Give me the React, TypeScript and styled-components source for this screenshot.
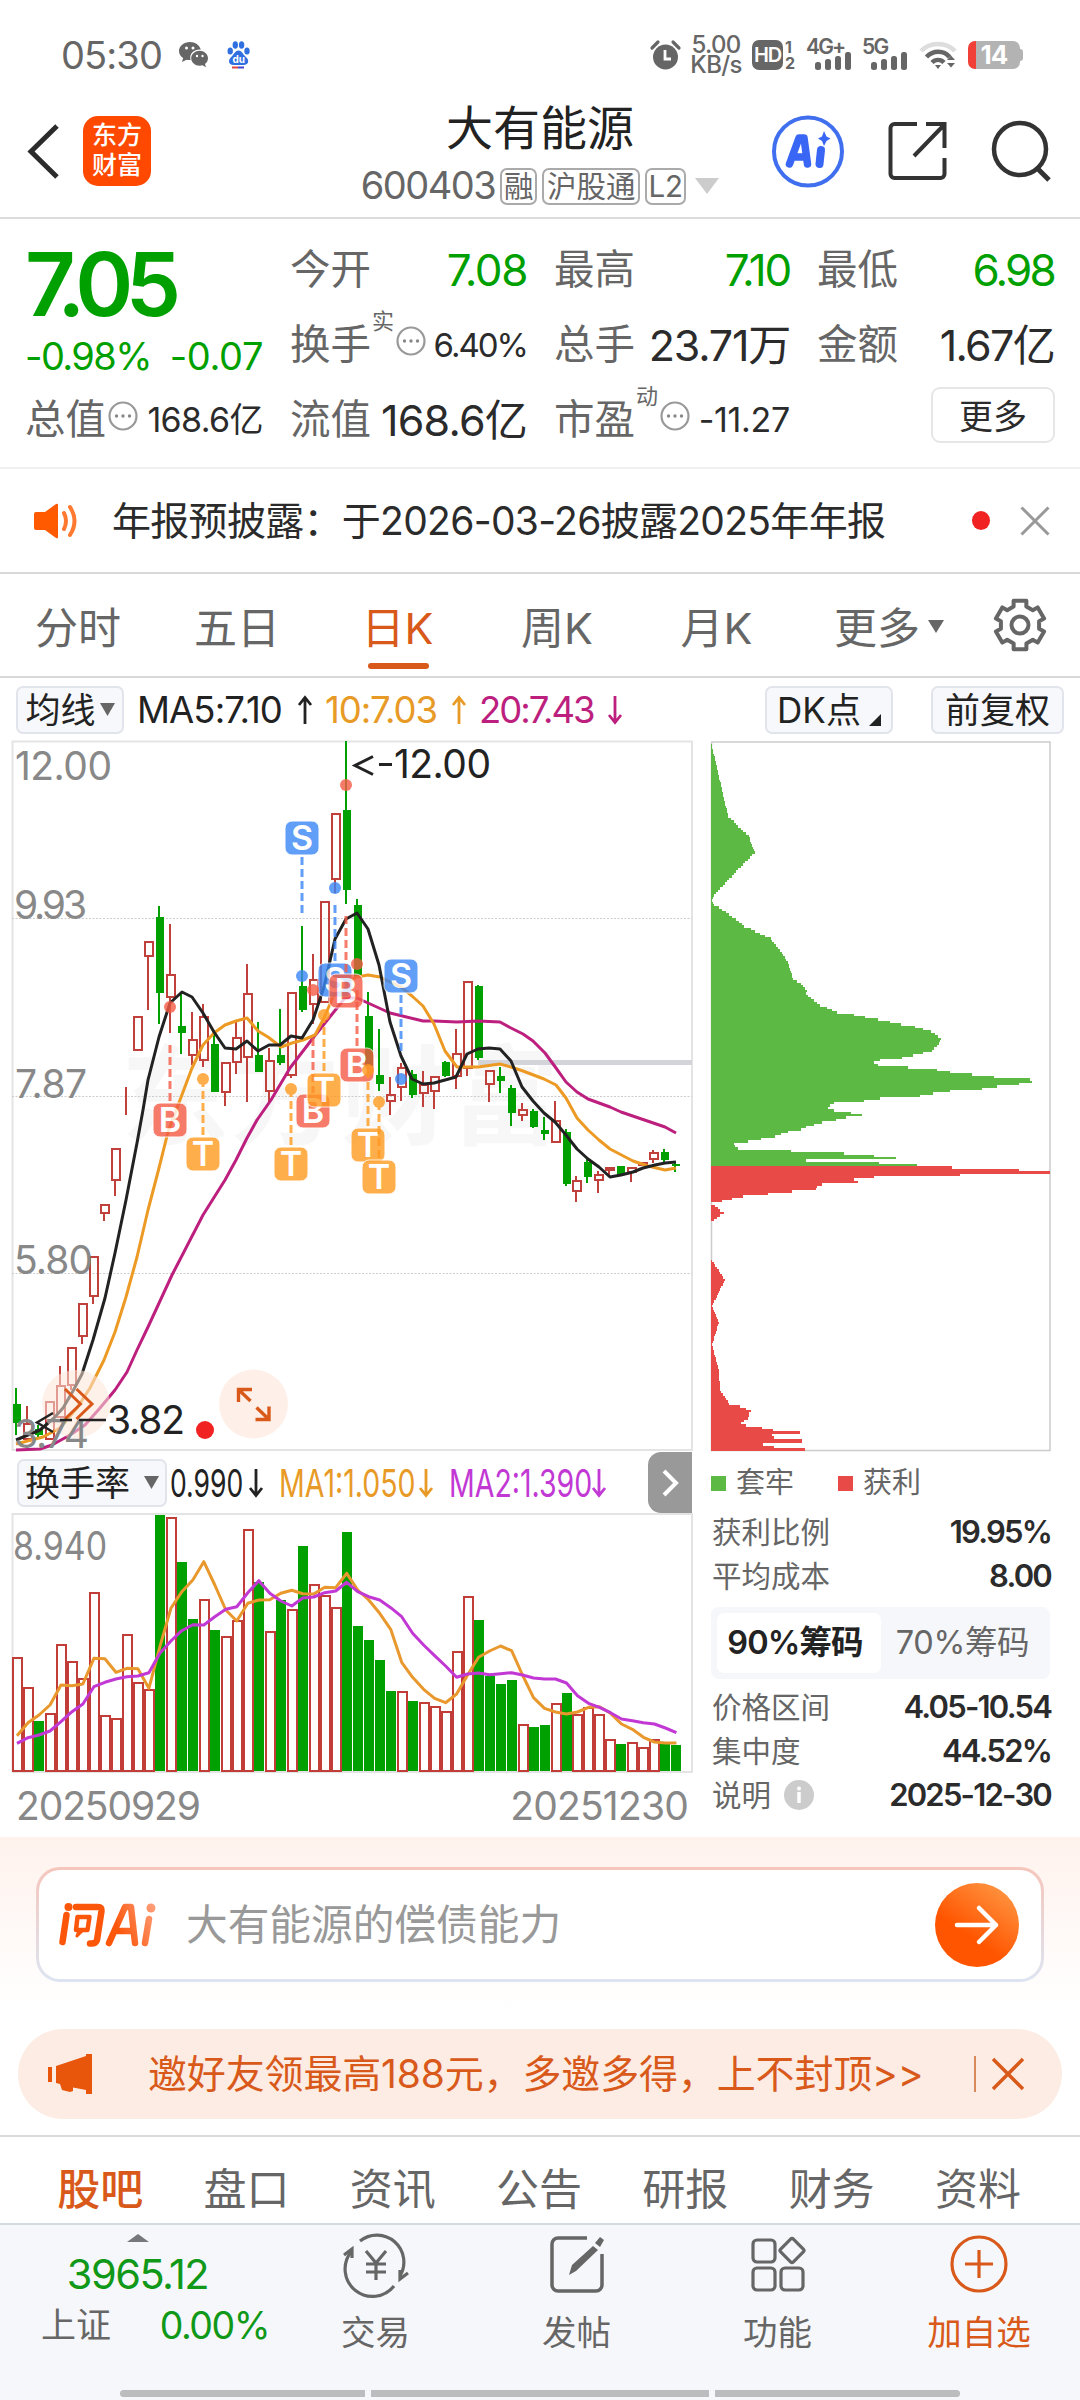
import React from 'react';
import styled, { createGlobalStyle, css } from 'styled-components';

const GREEN = '#00a000';
const RED = '#c0403c';
const ORANGE = '#e89a26';
const MAGENTA = '#bc1f7e';
const BRAND = '#d8591a';

const Global = createGlobalStyle`
  * { box-sizing: border-box; }
  html, body { margin: 0; padding: 0; background: #fff; }
  svg { display: block; flex: none; overflow: visible; }
`;

const Page = styled.main`
  width: 1080px;
  height: 2400px;
  overflow: hidden;
  display: flex;
  flex-direction: column;
  background: #fff;
  color: #2b2b2b;
  font-family: Inter, 'Noto Sans CJK SC', sans-serif;
  white-space: nowrap;
`;

type TextProps = { $size: number; $color?: string; $ls?: number; $mt?: number };
const Text = styled.span<TextProps>`
  font-size: ${p => p.$size}px;
  line-height: 1.2;
  color: ${p => p.$color ?? 'inherit'};
  letter-spacing: ${p => p.$ls ?? 0}px;
  margin-top: ${p => p.$mt ?? 0}px;
`;

/* ---------- status bar ---------- */

const StatusBar = styled.header`
  height: 109px;
  display: flex;
  align-items: center;
  padding: 0 60px 0 61px;
  color: #666;
`;
const Clock = styled.span`
  width: 118px;
  font-size: 38px;
  line-height: 46px;
  letter-spacing: -0.9px;
`;
const BaiduIcon = styled.svg`
  margin-left: 18px;
`;
const StatusIcons = styled.div`
  margin-left: auto;
  display: flex;
  align-items: center;
`;
const Speed = styled.div`
  width: 52px;
  margin: 0 10px 0 9px;
  font-size: 24px;
  line-height: 19.500px;
  font-weight: 500;
  text-align: center;
  letter-spacing: -0.7px;
`;
const HdBadge = styled.div`
  width: 31px;
  height: 30px;
  border-radius: 7px;
  background: #666;
  color: #fff;
  font-size: 20px;
  line-height: 30px;
  font-weight: 600;
  letter-spacing: -1.2px;
  text-align: center;
`;
const SimNumbers = styled.div`
  width: 12px;
  margin: 0 9px 0 2px;
  font-size: 16px;
  line-height: 16px;
  font-weight: 700;
`;
const Signal = styled.div<{ $w: number }>`
  width: ${p => p.$w}px;
  height: 32px;
  display: flex;
  flex-direction: column;
  font-size: 21px;
  line-height: 15px;
  font-weight: 600;
  letter-spacing: -1.8px;
  svg { margin: -2px 0 0 9px; }
`;
const Battery = styled.div`
  position: relative;
  width: 52px;
  height: 28px;
  margin-left: 11px;
  border-radius: 7px;
  background: linear-gradient(90deg, #f04038 0 8px, #b3b3b3 8px);
  color: #fff;
  font-size: 26px;
  line-height: 28px;
  font-weight: 700;
  text-align: center;
  letter-spacing: -1px;
  &::after {
    content: '';
    position: absolute;
    right: -3px;
    top: 8px;
    width: 3px;
    height: 12px;
    border-radius: 0 3px 3px 0;
    background: #b3b3b3;
  }
`;

const SignalBars = () => (
  <svg width="38" height="19" viewBox="0 0 38 19">
    <g fill="#666">
      <rect x="0" y="10" width="6" height="8" rx="2.500" />
      <rect x="10" y="7" width="6" height="11" rx="2.500" />
      <rect x="20" y="4" width="6" height="14" rx="2.500" />
      <rect x="30" y="0" width="6" height="18" rx="2.500" />
    </g>
  </svg>
);

function Status() {
  return (
    <StatusBar>
      <Clock>05:30</Clock>
      <svg width="30" height="26" viewBox="0 0 30 26">
        <path fill="#666" d="M11 0C4.800 0 0 4 0 9c0 3 1.600 5.400 4.200 7L3 20l4.500-2.300c1.200.3 2.300.4 3.500.4h.6C10 12 14.500 7.500 21 7.500h.8C20.500 3 16.200 0 11 0z" />
        <path fill="#666" d="M29 16.300c0-4.300-4-7.500-8.400-7.500s-8.400 3.200-8.400 7.500 4 7.500 8.400 7.500c1 0 2-.2 2.900-.5l3.400 2-.9-3.200c1.900-1.500 3-3.600 3-5.800z" />
        <g fill="#fff"><circle cx="7.500" cy="6" r="1.500" /><circle cx="14" cy="6" r="1.500" /><circle cx="18" cy="14" r="1.200" /><circle cx="23.500" cy="14" r="1.200" /></g>
      </svg>
      <BaiduIcon width="24" height="28" viewBox="0 0 24 28">
        <g fill="#2f6fe0">
          <ellipse cx="3.200" cy="10" rx="2.700" ry="3.600" /><ellipse cx="8.300" cy="4" rx="2.700" ry="3.800" />
          <ellipse cx="14.600" cy="4" rx="2.700" ry="3.800" /><ellipse cx="20" cy="10" rx="2.700" ry="3.600" />
          <path d="M11.500 9.500c-3 0-4.300 3.500-6.300 5.400C3 17 2 18.500 2 20.300 2 23 4 24 6.500 24h10c2.600 0 4.700-1.300 4.700-3.800 0-2.200-1.800-3.700-3.500-5.400-1.800-1.800-3-5.300-6.200-5.300z" />
        </g>
        <rect x="5" y="25.500" width="6" height="2" fill="#d44" /><rect x="11" y="25.500" width="6" height="2" fill="#44c" />
        <text x="5.500" y="22" fontSize="10" fontWeight="700" fill="#fff" fontFamily="Inter">du</text>
      </BaiduIcon>
      <StatusIcons>
        <svg width="31" height="30" viewBox="0 0 31 30">
          <circle cx="15.500" cy="17" r="12.500" fill="#666" />
          <path d="M2 8l6-6M29 8l-6-6" stroke="#666" strokeWidth="3.200" strokeLinecap="round" />
          <path d="M15 10v9h6" stroke="#fff" strokeWidth="2.800" fill="none" />
        </svg>
        <Speed>5.00<br />KB/s</Speed>
        <HdBadge>HD</HdBadge>
        <SimNumbers>1<br />2</SimNumbers>
        <Signal $w={56}>4G+<SignalBars /></Signal>
        <Signal $w={57}>5G<SignalBars /></Signal>
        <svg width="38" height="30" viewBox="0 0 38 30">
          <g fill="none" stroke="#666" strokeWidth="4.500">
            <path d="M2 11C11 1.500 27 1.500 36 11" stroke="#ddd" />
            <path d="M7.500 17C14 10 25 10 30.500 17" />
            <path d="M13 22.500C16.500 19 21.500 19 25 22.500" />
          </g>
          <path d="M19 29l-3-4h6zM28 20h8l-4-4.500zM28 23h8l-4 4.500z" fill="#666" />
        </svg>
        <Battery>14</Battery>
      </StatusIcons>
    </StatusBar>
  );
}

/* ---------- title bar ---------- */

const TitleBar = styled.div`
  height: 110px;
  border-bottom: 2px solid #dcdcdc;
  display: grid;
  grid-template-columns: 340px 400px 340px;
`;
const TitleLeft = styled.div`
  display: flex;
  align-items: flex-start;
  gap: 25px;
  padding: 7px 0 0 26px;
`;
const AppLogo = styled.div`
  width: 68px;
  height: 70px;
  border-radius: 15px;
  background: #ff4800;
  color: #fff;
  font-size: 25px;
  line-height: 30px;
  font-weight: 500;
  text-align: center;
  padding-top: 4px;
`;
const TitleCenter = styled.div`
  display: flex;
  flex-direction: column;
  align-items: center;
`;
const StockName = styled.h1`
  margin: -11px 0 0;
  font-size: 47px;
  line-height: 60px;
  font-weight: 400;
  color: #222;
`;
const CodeRow = styled.div`
  height: 38px;
  margin-top: 9px;
  display: flex;
  align-items: center;
  color: #666;
`;
const Tag = styled.span<{ $w: number }>`
  width: ${p => p.$w}px;
  height: 37px;
  margin-left: 5px;
  border: 2px solid #aaa;
  border-radius: 7px;
  font-size: 29.500px;
  line-height: 32px;
  text-align: center;
`;
const TagCaret = styled.svg`
  margin-left: 9px;
`;
const TitleRight = styled.div`
  display: flex;
  align-items: flex-start;
  padding: 6px 0 0 31px;
`;
const ShareIcon = styled.svg`
  margin: 5px 0 0 42px;
`;
const SearchIcon = styled.svg`
  margin: 6px 0 0 41px;
`;

function Title() {
  return (
    <TitleBar>
      <TitleLeft>
        <svg width="32" height="70" viewBox="0 0 32 70">
          <path d="M31 10L5 35.500 31 61" fill="none" stroke="#2b2b2b" strokeWidth="5" />
        </svg>
        <AppLogo>东方<br />财富</AppLogo>
      </TitleLeft>
      <TitleCenter>
        <StockName>大有能源</StockName>
        <CodeRow>
          <Text $size={38} $ls={-1.5}>600403</Text>
          <Tag $w={37}>融</Tag>
          <Tag $w={98}>沪股通</Tag>
          <Tag $w={41}>L2</Tag>
          <TagCaret width="24" height="16" viewBox="0 0 24 16"><path d="M0 0h24L12 16z" fill="#ccc" /></TagCaret>
        </CodeRow>
      </TitleCenter>
      <TitleRight>
        <svg width="74" height="74" viewBox="0 0 74 74">
          <circle cx="37" cy="36.500" r="34" fill="#fff" stroke="#3f6fee" strokeWidth="4" />
          <g fill="none" stroke="#3a66f5" strokeLinejoin="round" strokeLinecap="round">
            <path d="M18.500 49l9.500-26h5l3.500 26M23 42h12" strokeWidth="7.500" />
            <path d="M50 35l-1.500 14" strokeWidth="8" />
          </g>
          <path d="M53 16l2.500 5.500 4 2-4 2.500L53 31l-2-5-4-2.500 4-2z" fill="#3a66f5" />
        </svg>
        <ShareIcon width="62" height="62" viewBox="0 0 62 62">
          <g fill="none" stroke="#333" strokeWidth="4">
            <path d="M30 4H7.500a4 4 0 0 0-4 4v46a4 4 0 0 0 4 4h46a4 4 0 0 0 4-4V38" />
            <path d="M39 4h18.500v24M57 5L27 36" />
          </g>
        </ShareIcon>
        <SearchIcon width="64" height="64" viewBox="0 0 64 64">
          <circle cx="30" cy="28" r="26" fill="none" stroke="#333" strokeWidth="4.500" />
          <path d="M46 46l13 13" stroke="#333" strokeWidth="5" />
        </SearchIcon>
      </TitleRight>
    </TitleBar>
  );
}

/* ---------- quote summary ---------- */

const Quote = styled.section`
  height: 250px;
  border-bottom: 2px solid #efefef;
  padding: 13px 25px 0 25px;
  display: grid;
  grid-template-columns: 238px 237px 236px 237px;
  grid-template-rows: 75px 75px 75px;
  column-gap: 27px;
`;
const PriceCell = styled.div`
  grid-row: 1 / 3;
  display: flex;
  flex-direction: column;
`;
const Price = styled.div`
  margin-top: 8px;
  height: 88px;
  font-size: 88px;
  line-height: 88px;
  font-weight: 600;
  letter-spacing: -7.5px;
  color: ${GREEN};
`;
const Changes = styled.div`
  display: flex;
  justify-content: space-between;
  margin-top: 6px;
`;
const Cell = styled.div`
  height: 75px;
  display: flex;
  align-items: center;
  color: #666;
  font-size: 40.500px;
  line-height: 60px;
`;
const Value = styled.span<{ $size: number; $green?: boolean; $ls?: number }>`
  margin-left: auto;
  color: ${p => (p.$green ? GREEN : '#2b2b2b')};
  font-size: ${p => p.$size}px;
  letter-spacing: ${p => p.$ls ?? -1.7}px;
`;
const Sup = styled.sup`
  align-self: flex-start;
  margin: 0 0 0 1px;
  font-size: 22px;
  line-height: 28px;
`;
const DotsIcon = styled.svg`
  margin: 0 0 7px 2px;
`;
const MoreButton = styled.button`
  margin: -10px -1px 0 auto;
  width: 124px;
  height: 56px;
  border: 2px solid #e6e6e6;
  border-radius: 9px;
  background: #fff;
  padding: 0;
  font: 400 34px/50px 'Noto Sans CJK SC', sans-serif;
  color: #2b2b2b;
`;

const Dots = () => (
  <DotsIcon width="30" height="30" viewBox="0 0 30 30">
    <circle cx="15" cy="15" r="13.500" fill="none" stroke="#999" strokeWidth="2.200" />
    <g fill="#888"><circle cx="8.500" cy="15" r="1.700" /><circle cx="15" cy="15" r="1.700" /><circle cx="21.500" cy="15" r="1.700" /></g>
  </DotsIcon>
);

function QuotePanel() {
  return (
    <Quote>
      <PriceCell>
        <Price>7.05</Price>
        <Changes>
          <Text $size={38} $color={GREEN} $ls={-1.6}>-0.98%</Text>
          <Text $size={38} $color={GREEN} $ls={-0.4}>-0.07</Text>
        </Changes>
      </PriceCell>
      <Cell>今开<Value $size={44} $green $ls={-1.4}>7.08</Value></Cell>
      <Cell>最高<Value $size={44} $green $ls={-2.2}>7.10</Value></Cell>
      <Cell>最低<Value $size={44} $green $ls={-2.8}>6.98</Value></Cell>
      <Cell>换手<Sup>实</Sup><Dots /><Value $size={33} $ls={-2}>6.40%</Value></Cell>
      <Cell>总手<Value $size={43} $ls={-1.2}>23.71万</Value></Cell>
      <Cell>金额<Value $size={43}>1.67亿</Value></Cell>
      <Cell>总值<Dots /><Value $size={34} $ls={-0.6}>168.6亿</Value></Cell>
      <Cell>流值<Value $size={43} $ls={-0.8}>168.6亿</Value></Cell>
      <Cell>市盈<Sup>动</Sup><Dots /><Value $size={34} $ls={-0.3}>-11.27</Value></Cell>
      <Cell><MoreButton>更多</MoreButton></Cell>
    </Quote>
  );
}

/* ---------- notice ---------- */

const Notice = styled.section`
  height: 105px;
  border-bottom: 2px solid #d9d9d9;
  display: flex;
  align-items: center;
  padding: 0 30px 0 32px;
`;
const NoticeText = styled.p`
  margin: 0 0 0 32px;
  flex: 1;
  font-size: 39px;
  line-height: 60px;
  letter-spacing: -0.7px;
`;
const RedDot = styled.i`
  width: 18px;
  height: 19px;
  border-radius: 50%;
  background: #f02222;
  margin-right: 30px;
`;

function NoticeBar() {
  return (
    <Notice>
      <svg width="48" height="38" viewBox="0 0 48 38">
        <path d="M2 12q0-2 2-2h9L24 2q2-1 2 1v32q0 2-2 1L13 28H4q-2 0-2-2z" fill="#ff5a00" />
        <path d="M32 11q4 8 0 16M38 5q9 14 0 28" fill="none" stroke="#ff7a30" strokeWidth="4" strokeLinecap="round" />
      </svg>
      <NoticeText>年报预披露：于2026-03-26披露2025年年报</NoticeText>
      <RedDot />
      <svg width="30" height="30" viewBox="0 0 30 30"><path d="M1.500 1.500l27 27M28.500 1.500l-27 27" stroke="#999" strokeWidth="3" /></svg>
    </Notice>
  );
}

/* ---------- period tabs ---------- */

const Tabs = styled.nav`
  height: 104px;
  border-bottom: 2px solid #d9d9d9;
  display: grid;
  grid-template-columns: 158px 160px 161px 158px 161px 184px 98px;
`;
const Tab = styled.div<{ $active?: boolean }>`
  position: relative;
  display: flex;
  align-items: center;
  justify-content: center;
  padding: 5px 2px 0 0;
  font-size: 43px;
  line-height: 60px;
  color: ${p => (p.$active ? BRAND : '#666')};
  ${p => p.$active && css`
    &::after {
      content: '';
      position: absolute;
      left: 50%;
      bottom: 7px;
      width: 61px;
      height: 6px;
      margin-left: -31px;
      border-radius: 3px;
      background: ${BRAND};
    }
  `}
`;
const TabCaret = styled.svg`
  margin: -3px 0 0 8px;
`;
const Gear = styled.svg`
  margin: -5px 0 0 -21px;
`;

const gearPath = (() => {
  const pts: string[] = [];
  for (let i = 0; i < 6; i++) {
    const base = (i * 60 - 90) * (Math.PI / 180);
    [[-0.26, 25], [0.26, 25], [0.33, 19.500], [0.715, 19.500]].forEach(([a, r]) => {
      pts.push(`${(27 + r * Math.cos(base + a)).toFixed(1)} ${(27 + r * Math.sin(base + a)).toFixed(1)}`);
    });
  }
  return `M${pts.join('L')}Z`;
})();

function PeriodTabs() {
  return (
    <Tabs>
      <Tab>分时</Tab>
      <Tab>五日</Tab>
      <Tab $active>日K</Tab>
      <Tab>周K</Tab>
      <Tab>月K</Tab>
      <Tab>更多<TabCaret width="16" height="13" viewBox="0 0 16 13"><path d="M0 0h16L8 13z" fill="#666" /></TabCaret></Tab>
      <Tab>
        <Gear width="54" height="54" viewBox="0 0 54 54">
          <path d={gearPath} fill="none" stroke="#666" strokeWidth="4" strokeLinejoin="round" />
          <circle cx="27" cy="27" r="8.500" fill="none" stroke="#666" strokeWidth="4" />
        </Gear>
      </Tab>
    </Tabs>
  );
}

/* ---------- shared chart controls ---------- */

const Pill = styled.button<{ $w: number; $gap?: number; $size?: number }>`
  width: ${p => p.$w}px;
  height: 48px;
  padding: 0;
  display: flex;
  align-items: center;
  justify-content: center;
  gap: ${p => p.$gap ?? 4}px;
  border: 2px solid #e2e4ec;
  border-radius: 7px;
  background: #f7f8fb;
  font: 400 ${p => p.$size ?? 35}px/44px Inter, 'Noto Sans CJK SC', sans-serif;
  color: #222;
`;
const Caret = () => <svg width="15" height="13" viewBox="0 0 15 13"><path d="M0 0h15L7.500 13z" fill="#666" /></svg>;
const Corner = styled.svg`
  margin-top: 20px;
`;

const Arrow = ({ color, down }: { color: string; down?: boolean }) => (
  <svg width="14" height="28" viewBox="0 0 14 28">
    <path d={down ? 'M7 0v26M1 19L7 26.500l6-7.500' : 'M7 28V2M1 9L7 1.500l6 7.500'} fill="none" stroke={color} strokeWidth="2.800" />
  </svg>
);

const MaRow = styled.div`
  height: 63px;
  display: flex;
  align-items: center;
  padding: 0 16px 0 16px;
`;
const MaValue = styled.div<{ $w: number; $color: string; $ls?: number }>`
  width: ${p => p.$w}px;
  display: flex;
  align-items: center;
  justify-content: space-between;
  margin-left: 13px;
  font-size: 36.500px;
  letter-spacing: ${p => p.$ls ?? -1.5}px;
  color: ${p => p.$color};
`;
const Spacer = styled.i<{ $w?: number; $h?: number }>`
  flex: ${p => (p.$w || p.$h ? 'none' : 1)};
  width: ${p => p.$w ?? 0}px;
  height: ${p => p.$h ?? 0}px;
`;

function MaHeader() {
  return (
    <MaRow>
      <Pill $w={108}>均线<Caret /></Pill>
      <MaValue $w={175} $color="#222" $ls={-0.9}>MA5:7.10<Arrow color="#222" /></MaValue>
      <MaValue $w={141} $color={ORANGE} $ls={-1.1}>10:7.03<Arrow color={ORANGE} /></MaValue>
      <MaValue $w={143} $color={MAGENTA} $ls={-2}>20:7.43<Arrow color={MAGENTA} down /></MaValue>
      <Spacer />
      <Pill $w={128} $gap={8}>DK点<Corner width="12" height="12" viewBox="0 0 12 12"><path d="M12 0v12H0z" fill="#222" /></Corner></Pill>
      <Spacer $w={38} />
      <Pill $w={133}>前复权</Pill>
    </MaRow>
  );
}

/* ---------- candle chart ---------- */

const ChartGrid = styled.section`
  display: grid;
  grid-template-columns: 700px 380px;
  height: 1096px;
`;
const Column = styled.div`
  display: flex;
  flex-direction: column;
`;

const STEP = 10.99;
/* direction, high, body top, body bottom, low */
type Candle = [0 | 1, number, number, number, number];
const candles: Candle[] = [
  [0, 1388, 1404, 1423, 1435], [1, 1406, 1423, 1440, 1440], [0, 1425, 1429, 1435, 1439], [1, 1401, 1401, 1440, 1440],
  [1, 1366, 1385, 1418, 1418], [1, 1347, 1347, 1386, 1390], [1, 1303, 1303, 1337, 1344], [1, 1256, 1256, 1297, 1304],
  [1, 1204, 1204, 1214, 1221], [1, 1148, 1148, 1181, 1196], [1, 1085, 1085, 1087, 1115], [1, 1016, 1016, 1051, 1051],
  [1, 941, 941, 957, 1010], [0, 906, 917, 993, 1024], [1, 924, 974, 998, 1033], [0, 993, 1026, 1033, 1054],
  [1, 1012, 1039, 1056, 1065], [1, 1004, 1016, 1061, 1067], [0, 1033, 1044, 1092, 1092], [1, 1062, 1062, 1093, 1106],
  [1, 1020, 1037, 1063, 1074], [1, 964, 993, 1058, 1102], [0, 1022, 1055, 1072, 1072], [1, 1048, 1060, 1092, 1103],
  [0, 1009, 1055, 1063, 1065], [1, 992, 992, 1076, 1078], [0, 926, 986, 1010, 1012], [1, 954, 979, 1005, 1024],
  [1, 901, 901, 1003, 1003], [1, 813, 813, 880, 893], [0, 741, 810, 890, 904], [0, 899, 905, 978, 978],
  [0, 992, 1016, 1066, 1066], [0, 1029, 1075, 1084, 1091], [1, 1077, 1094, 1102, 1115], [1, 1063, 1067, 1088, 1101],
  [0, 1070, 1074, 1095, 1098], [1, 1071, 1084, 1094, 1107], [1, 1076, 1076, 1092, 1109], [0, 1061, 1062, 1076, 1077],
  [1, 1029, 1053, 1077, 1089], [1, 981, 981, 1069, 1076], [0, 985, 986, 1058, 1060], [1, 1070, 1070, 1085, 1102],
  [0, 1067, 1076, 1081, 1093], [0, 1085, 1088, 1113, 1126], [1, 1103, 1109, 1116, 1121], [0, 1109, 1111, 1127, 1128],
  [0, 1117, 1130, 1134, 1140], [1, 1101, 1120, 1143, 1143], [0, 1129, 1132, 1184, 1186], [1, 1176, 1180, 1192, 1202],
  [0, 1157, 1162, 1177, 1183], [1, 1171, 1174, 1181, 1193], [1, 1167, 1167, 1171, 1175], [0, 1166, 1166, 1175, 1175],
  [1, 1167, 1167, 1173, 1182], [1, 1162, 1162, 1166, 1166], [1, 1150, 1152, 1160, 1163], [0, 1149, 1152, 1160, 1162],
  [0, 1162, 1164, 1166, 1172],
];
const ma5 = '16,1440 40,1430 54,1418 63,1408 73,1391 82,1374 93,1340 105,1298 115,1253 126,1200 137,1143 143,1110 148,1080 159,1037 170,1003 182,992 192,997 203,1013 214,1032 225,1048 236,1049 247,1041 258,1051 269,1045 280,1045 291,1036 302,1038 313,1020 324,987 335,939 346,919 357,913 368,929 379,965 390,1022 401,1056 412,1079 423,1084 434,1083 445,1080 456,1077 467,1054 478,1049 489,1048 500,1049 511,1061 522,1087 533,1101 544,1113 555,1122 566,1135 577,1149 588,1159 599,1167 610,1177 621,1175 633,1172 643,1168 655,1165 665,1163 676,1162';
const ma10 = '16,1444 43,1437 60,1428 77,1408 90,1388 104,1360 115,1332 126,1297 137,1257 148,1210 159,1168 168,1132 180,1100 192,1068 203,1045 214,1033 225,1025 236,1021 247,1018 258,1031 268,1037 281,1047 292,1043 303,1040 315,1035 324,1018 333,997 346,982 357,977 368,975 380,977 390,982 401,987 412,996 423,1006 434,1024 445,1051 457,1067 478,1067 500,1064 511,1067 523,1071 544,1079 556,1085 566,1098 577,1118 588,1130 599,1140 610,1149 633,1161 648,1166 665,1170 676,1168';
const ma20 = '16,1450 40,1449 52,1445 70,1435 85,1425 100,1408 115,1390 127,1372 137,1350 148,1327 172,1275 203,1215 225,1180 236,1160 247,1138 257,1120 271,1100 290,1068 313,1038 337,1008 345,998 357,998 368,1003 390,1013 423,1021 434,1021 457,1022 478,1021 500,1022 511,1028 523,1034 533,1041 545,1053 556,1068 566,1082 577,1092 588,1099 610,1107 621,1112 665,1127 676,1133';

type Mark = { t: 'S' | 'B' | 'T'; x: number; y: number; from: number; to: number; dot: number };
const marks: Mark[] = [
  { t: 'S', x: 302, y: 838, from: 857, to: 914, dot: 976 },
  { t: 'S', x: 335, y: 980, from: 905, to: 962, dot: 888 },
  { t: 'B', x: 170, y: 1120, from: 1045, to: 1103, dot: 1007 },
  { t: 'T', x: 203, y: 1154, from: 1079, to: 1136, dot: 1079 },
  { t: 'T', x: 291, y: 1164, from: 1089, to: 1147, dot: 1089 },
  { t: 'B', x: 313, y: 1111, from: 1038, to: 1093, dot: 990 },
  { t: 'B', x: 346, y: 991, from: 916, to: 973, dot: 785 },
  { t: 'T', x: 324, y: 1090, from: 1015, to: 1073, dot: 1015 },
  { t: 'B', x: 357, y: 1065, from: 990, to: 1047, dot: 964 },
  { t: 'T', x: 368, y: 1145, from: 1070, to: 1127, dot: 1070 },
  { t: 'T', x: 379, y: 1177, from: 1102, to: 1158, dot: 1102 },
  { t: 'S', x: 401, y: 976, from: 995, to: 1052, dot: 1079 },
];
const markColor = { S: '#3a86f6', B: '#f55b45', T: '#ff9a20' };

const AxisText = styled.text<{ $dark?: boolean }>`
  font: 400 39px Inter, sans-serif;
  fill: ${p => (p.$dark ? '#222' : '#888')};
`;

function CandleChart() {
  return (
    <svg width="700" height="711" viewBox="0 741 700 711">
      <text x="121" y="1136" fontSize="108" fontWeight="700" letterSpacing="2" fill="#f7f7f7" fontFamily="'Noto Sans CJK SC'">东方财富</text>
      <g stroke="#e4e4e4" strokeWidth="2" fill="none">
        <path d="M12.500 741.500H692V1450H12.500z" />
      </g>
      <path d="M12 918.500H692M12 1096.500H692M12 1273.500H692" stroke="#ccc" strokeWidth="1" strokeDasharray="2 1.500" />
      <path d="M478 1062.500H692" stroke="#d2d4da" strokeWidth="5" />
      {candles.map(([up, high, top, bottom, low], i) => {
        const x = Math.round(16 + STEP * i);
        return up ? (
          <g key={i} stroke={RED} strokeWidth="2" fill="none">
            <path d={`M${x} ${high}V${top}M${x} ${bottom}V${low}`} />
            <rect x={x - 3} y={top + 1} width="8" height={Math.max(0, bottom - top - 2)} />
          </g>
        ) : (
          <g key={i} fill={GREEN}>
            <rect x={x - 1} y={high} width="2" height={low - high} />
            <rect x={x - 3} y={top} width="8" height={bottom - top} />
          </g>
        );
      })}
      <g fill="none" strokeWidth="3" strokeLinejoin="round">
        <polyline points={ma20} stroke={MAGENTA} />
        <polyline points={ma10} stroke="#ec9a24" />
        <polyline points={ma5} stroke="#222" />
      </g>
      {marks.map((m, i) => (
        <g key={i} fill={markColor[m.t]} opacity="0.8">
          <circle cx={m.x} cy={m.dot} r="6" />
          <path d={`M${m.x} ${m.from}V${m.to}`} stroke={markColor[m.t]} strokeWidth="3" strokeDasharray="8 4" />
          <rect x={m.x - 17} y={m.y - 17} width="34" height="34" rx="7" stroke="#fff" strokeWidth="1" />
          <text x={m.x} y={m.y + 12} textAnchor="middle" fontSize="34" fontWeight="600" fontFamily="Inter" fill="#fff">{m.t}</text>
        </g>
      ))}
      <circle cx="76" cy="1404" r="34" fill="#fde5d9" opacity="0.55" />
      <path d="M65 1389l15.500 15-15.500 15M76.500 1389l15.500 15-15.500 15" fill="none" stroke={BRAND} strokeWidth="3" />
      <circle cx="253.500" cy="1404" r="34.500" fill="#fef0e9" />
      <path d="M238.500 1402v-12.500H252M239 1390l11.500 11M269 1406.500v13H255.500M268.500 1419l-12-11.500" fill="none" stroke={BRAND} strokeWidth="3.400" />
      <AxisText x="15" y="780" textLength="97">12.00</AxisText>
      <AxisText x="14" y="919" textLength="73">9.93</AxisText>
      <AxisText x="15" y="1098" textLength="72">7.87</AxisText>
      <AxisText x="14" y="1274" textLength="79">5.80</AxisText>
      <AxisText x="14" y="1448" textLength="75">3.74</AxisText>
      <path d="M373 756.500l-18 9 18 9M379 764.500h13" fill="none" stroke="#222" strokeWidth="3" />
      <AxisText $dark x="394" y="778" textLength="97">12.00</AxisText>
      <path d="M53 1413l-16 9.500 16 9.500M60 1420h12M79 1420h27" fill="none" stroke="#222" strokeWidth="2.500" />
      <AxisText $dark x="107" y="1434" textLength="78">3.82</AxisText>
      <circle cx="205" cy="1430" r="9" fill="#f02222" />
    </svg>
  );
}

/* ---------- turnover chart ---------- */

const TurnoverHeader = styled.div`
  height: 61px;
  width: 692px;
  display: flex;
  align-items: center;
  padding-left: 17px;
`;
const Narrow = styled.div<{ $w: number; $ml: number; $color: string; $scale: number }>`
  width: ${p => p.$w}px;
  margin-left: ${p => p.$ml}px;
  display: flex;
  align-items: center;
  justify-content: space-between;
  color: ${p => p.$color};
  span {
    width: 0;
    font-size: 38.500px;
    line-height: 46px;
    transform: scaleX(${p => p.$scale});
    transform-origin: 0 50%;
  }
`;
const Collapse = styled.button`
  margin-left: auto;
  width: 44px;
  height: 61px;
  padding: 0;
  border: 0;
  border-radius: 13px 0 0 13px;
  background: #999;
  display: flex;
  align-items: center;
  justify-content: center;
`;
const Dates = styled.div`
  display: flex;
  justify-content: space-between;
  width: 688px;
  height: 64px;
  padding: 10px 0 0 16px;
`;

const greenBars = new Set([2, 13, 15, 16, 18, 22, 24, 26, 30, 31, 32, 33, 34, 36, 42, 43, 44, 45, 47, 48, 50, 55, 59, 60]);
const barTops = [1657, 1687, 1721, 1713, 1644, 1661, 1678, 1592, 1715, 1718, 1634, 1682, 1689, 1515, 1517, 1562, 1619, 1599, 1630, 1636, 1620, 1529, 1582, 1631, 1600, 1609, 1546, 1584, 1595, 1607, 1532, 1626, 1640, 1660, 1691, 1691, 1701, 1702, 1706, 1711, 1651, 1596, 1620, 1676, 1684, 1680, 1724, 1727, 1725, 1703, 1693, 1714, 1707, 1714, 1739, 1744, 1742, 1747, 1739, 1742, 1745];
const avg1 = [857, 818, 795, 765, 705, 707, 702, 625, 626, 667, 655, 656, 715, 590, 475, 425, 390, 335, 405, 480, 513, 460, 450, 449, 430, 421, 431, 432, 412, 413, 370, 420, 450, 490, 538, 637, 682, 718, 745, 758, 732, 675, 622, 603, 588, 602, 675, 743, 775, 786, 792, 786, 772, 770, 790, 822, 838, 862, 876, 879, 879];
const avg2 = [880, 863, 855, 843, 815, 785, 762, 710, 697, 687, 680, 678, 668, 610, 573, 542, 524, 525, 500, 478, 470, 428, 392, 430, 453, 468, 444, 441, 428, 423, 397, 425, 440, 450, 473, 500, 550, 585, 617, 648, 682, 672, 669, 674, 671, 668, 675, 684, 687, 687, 699, 737, 760, 772, 788, 807, 812, 818, 822, 834, 848];
const toLine = (vals: number[]) => vals.map((v, i) => `${(17 + STEP * i).toFixed(1)},${(1450 + v / 3).toFixed(1)}`).join(' ');

function TurnoverChart() {
  return (
    <svg width="700" height="260" viewBox="0 1513 700 260">
      <path d="M12.500 1514H692V1772H12.500z" fill="none" stroke="#e4e4e4" strokeWidth="2" />
      {barTops.map((top, i) => {
        const x = Math.round(12 + STEP * i);
        return greenBars.has(i)
          ? <rect key={i} x={x} y={top} width="10" height={1771 - top} fill={GREEN} />
          : <rect key={i} x={x + 1} y={top + 1} width="9" height={1770 - top} fill="#fff" stroke="#c23c38" strokeWidth="2" />;
      })}
      <g fill="none" strokeWidth="3" strokeLinejoin="round">
        <polyline points={toLine(avg1)} stroke="#e8982c" />
        <polyline points={toLine(avg2)} stroke="#c238d4" />
      </g>
      <AxisText x="13" y="1560" textLength="94" lengthAdjust="spacingAndGlyphs">8.940</AxisText>
    </svg>
  );
}

/* ---------- chip distribution ---------- */

const chips: [number, number][] = [
  [741.6, 0], [816, 17], [837, 38], [852, 44], [895, 3], [900, 1], [904, 3], [925.5, 33], [939.5, 60], [953.5, 71], [963, 77], [979, 82],
  [984, 90], [991, 96], [994, 95], [1005, 109], [1012, 126], [1015, 143], [1018, 154], [1020, 167], [1022, 179], [1025, 190], [1027, 204],
  [1029, 212], [1033, 224], [1039, 230], [1046.5, 226], [1050, 221], [1052, 212], [1054.5, 202], [1057, 191], [1059, 176], [1061.5, 163],
  [1063, 155], [1065, 167], [1067.5, 197], [1070, 226], [1072.5, 239], [1075, 261], [1077, 283], [1080, 319], [1082.5, 321], [1085, 308],
  [1087.5, 286], [1090, 271], [1092, 239], [1095, 209], [1097, 185], [1100, 153], [1102, 127], [1104.500, 119], [1107.5, 117], [1111, 123],
  [1114, 151], [1116.5, 135], [1119, 125], [1121, 126], [1123.5, 111], [1126, 95], [1128, 87], [1130.5, 90], [1133, 77], [1135.5, 64],
  [1138, 50], [1140.5, 37], [1143, 23], [1145, 21], [1147, 24], [1149.5, 27], [1152, 80], [1154, 133], [1157, 185], [1159, 144], [1161.5, 95],
  [1164, 168], [1166.5, 241], [1168.5, 274], [1171.5, 339], [1174, 249], [1176.5, 163], [1179, 143], [1181, 147], [1183.5, 111], [1186, 106],
  [1188.5, 105], [1191, 81], [1193, 57], [1195.5, 32], [1198, 21], [1200.5, 11], [1203, 0], [1206, 4], [1209.5, 9], [1212, 13], [1215.5, 9],
  [1220, 3], [1221.5, 0], [1259, 0], [1280, 14], [1306, 1], [1322.5, 8], [1344.5, 1], [1371.5, 8], [1390, 9], [1403, 18], [1404.5, 23],
  [1407, 29], [1409, 35], [1412, 40], [1414.5, 38], [1419, 37], [1422, 30], [1424, 56], [1426.5, 35], [1429, 51], [1431, 62], [1433.5, 89],
  [1436, 61], [1438.5, 63], [1441, 91], [1443, 45], [1445.5, 52], [1448, 63], [1450, 94],
];
const chipWidth = (y: number) => {
  const near = chips.find(c => Math.abs(c[0] - y) < 1.2);
  if (near) return near[1];
  const i = chips.findIndex(c => c[0] > y);
  if (i < 1) return 0;
  const [y0, w0] = chips[i - 1];
  const [y1, w1] = chips[i];
  return w0 + ((w1 - w0) * (y - y0)) / (y1 - y0);
};
const chipRows = Array.from({ length: 297 }, (_, i) => 741.6 + i * 2.387);

function ChipChart() {
  return (
    <svg width="380" height="711" viewBox="700 741 380 711">
      <path d="M711.500 742H1050V1450.500H711.500z" fill="none" stroke="#ccc" strokeWidth="1.500" />
      <g shapeRendering="crispEdges">
        {chipRows.map(y => (
          <rect key={y} x="711" y={Math.round(y)} width={chipWidth(y + 1.2)} height={Math.round(y + 2.387) - Math.round(y)} fill={y < 1164.500 ? '#5cb944' : '#e84a48'} />
        ))}
      </g>
    </svg>
  );
}

const Stats = styled.div`
  padding: 14px 30px 0 11px;
  display: flex;
  flex-direction: column;
`;
const Legend = styled.div`
  height: 34px;
  display: flex;
  align-items: center;
  font-size: 29px;
  line-height: 34px;
  color: #666;
`;
const Swatch = styled.i<{ $color: string; $ml?: number }>`
  width: 15px;
  height: 15px;
  margin: 0 10px 0 ${p => p.$ml ?? 0}px;
  background: ${p => p.$color};
`;
const StatRow = styled.div`
  height: 44px;
  display: flex;
  align-items: center;
  justify-content: space-between;
  font-size: 29.500px;
  line-height: 44px;
  color: #666;
  padding-left: 1px;
  b {
    font-size: 31px;
    font-weight: 600;
    letter-spacing: -1.8px;
    color: #2b2b2b;
    margin-right: -1px;
  }
`;
const StatLabel = styled.span`
  display: flex;
  align-items: center;
  gap: 13px;
`;
const Segmented = styled.div`
  height: 72px;
  margin: 9px 0 6px;
  padding: 6px;
  border-radius: 8px;
  background: #f6f7fa;
  display: grid;
  grid-template-columns: 164px 1fr;
`;
const Segment = styled.div<{ $active?: boolean }>`
  border-radius: 7px;
  background: ${p => (p.$active ? '#fff' : 'transparent')};
  color: ${p => (p.$active ? '#222' : '#666')};
  font-weight: ${p => (p.$active ? 600 : 400)};
  font-size: 32.500px;
  line-height: 60px;
  text-align: center;
  padding-right: ${p => (p.$active ? 8 : 0)}px;
  letter-spacing: ${p => (p.$active ? -0.9 : -0.4)}px;
`;

function ChipStats() {
  return (
    <Stats>
      <Legend><Swatch $color="#5cb944" />套牢<Swatch $color="#e84a48" $ml={44} />获利</Legend>
      <Spacer $h={10} />
      <StatRow>获利比例<b>19.95%</b></StatRow>
      <StatRow>平均成本<b>8.00</b></StatRow>
      <Segmented><Segment $active>90%筹码</Segment><Segment>70%筹码</Segment></Segmented>
      <StatRow>价格区间<b>4.05-10.54</b></StatRow>
      <StatRow>集中度<b>44.52%</b></StatRow>
      <StatRow>
        <StatLabel>说明
          <svg width="30" height="30" viewBox="0 0 30 30"><circle cx="15" cy="15" r="15" fill="#ccc" /><circle cx="15" cy="8.500" r="2" fill="#fff" /><path d="M15 12v11" stroke="#fff" strokeWidth="3.500" /></svg>
        </StatLabel>
        <b>2025-12-30</b>
      </StatRow>
    </Stats>
  );
}

/* ---------- AI question box ---------- */

const AiSection = styled.section`
  height: 192px;
  padding: 30px 36px 0;
  background: linear-gradient(#fff2ed, #fff 90%);
`;
const AiBox = styled.div`
  height: 115px;
  border: 3px solid transparent;
  border-radius: 24px;
  background: linear-gradient(#fff, #fff) padding-box, linear-gradient(#f5c6bc, #dde5f2) border-box;
  display: flex;
  align-items: center;
  padding: 0 22px 0 20px;
`;
const AiLogo = styled.div`
  width: 127px;
  display: flex;
  align-items: center;
`;
const AiPrompt = styled.span`
  flex: 1;
  font-size: 41.700px;
  line-height: 60px;
  color: #999;
`;
const Go = styled.button`
  width: 84px;
  height: 84px;
  padding: 0;
  border: 0;
  border-radius: 50%;
  background: linear-gradient(215deg, #ff9440 10%, #ff5500 62%);
  display: flex;
  align-items: center;
  justify-content: center;
`;

function AskAi() {
  return (
    <AiSection>
      <AiBox>
        <AiLogo>
          <svg width="100" height="46" viewBox="0 0 100 46">
            <defs>
              <linearGradient id="ask" gradientUnits="userSpaceOnUse" x1="0" y1="46" x2="100" y2="0">
                <stop offset="0.55" stopColor="#fb560a" /><stop offset="1" stopColor="#ffa888" />
              </linearGradient>
            </defs>
            <g fill="none" stroke="url(#ask)" strokeWidth="6.500" strokeLinecap="round" strokeLinejoin="round">
              <path d="M7.500 13L3.500 40M17 5h22q4 0 3.500 4L38 38q-1 4-7 3.500" />
              <path d="M18.500 15h12l-2 13H17z" strokeWidth="4.500" />
              <path d="M20 29l-2 5 5-5" strokeWidth="3" />
              <path d="M50 41L66 5h6l4 36M57 29h17" />
              <path d="M90 17l-4 24" />
            </g>
            <g fill="url(#ask)"><circle cx="9.500" cy="5" r="4" /><circle cx="92" cy="6" r="4.500" /></g>
          </svg>
        </AiLogo>
        <AiPrompt>大有能源的偿债能力</AiPrompt>
        <Go>
          <svg width="44" height="40" viewBox="0 0 44 40"><path d="M2 20h39M24 3l17 17-17 17" fill="none" stroke="#fff" strokeWidth="4.500" strokeLinecap="round" strokeLinejoin="round" /></svg>
        </Go>
      </AiBox>
    </AiSection>
  );
}

/* ---------- promo ---------- */

const Promo = styled.section`
  margin: 0 18px;
  height: 90px;
  border-radius: 45px;
  background: #fcece3;
  display: flex;
  align-items: center;
  padding: 0 38px 0 29px;
  color: ${BRAND};
`;
const PromoText = styled.span`
  flex: 1;
  margin-left: 53px;
  font-size: 39px;
  line-height: 56px;
  letter-spacing: -0.15px;
`;
const PromoDivider = styled.i`
  width: 2px;
  height: 36px;
  background: #d98a5c;
  margin-right: 16px;
`;

/* ---------- content tabs ---------- */

const ContentTabs = styled.nav`
  height: 90px;
  margin-top: 16px;
  border-top: 2px solid #d9dadc;
  border-bottom: 2px solid #d5dade;
  display: grid;
  grid-template-columns: repeat(7, 146.300px);
  padding-left: 27px;
  font-size: 43px;
  line-height: 105px;
  text-align: center;
  color: #666;
`;
const ContentTab = styled.span<{ $active?: boolean }>`
  ${p => p.$active && css`color: ${BRAND}; font-weight: 500;`}
`;

/* ---------- bottom bar ---------- */

const BottomBar = styled.footer`
  height: 175px;
  background: #f6f7fa;
  display: flex;
  flex-direction: column;
`;
const BottomRow = styled.div`
  height: 165px;
  display: grid;
  grid-template-columns: 275px 201px 201px 201px 202px;
`;
const Index = styled.div`
  display: flex;
  flex-direction: column;
  align-items: center;
  padding-top: 9px;
`;
const IndexRow = styled.div`
  width: 100%;
  display: flex;
  align-items: center;
  justify-content: space-between;
  padding: 0 6px 0 41px;
  margin-top: 3px;
`;
const Action = styled.div<{ $active?: boolean }>`
  display: flex;
  flex-direction: column;
  align-items: center;
  padding-top: 9px;
  color: ${p => (p.$active ? BRAND : '#666')};
  font-size: 34.500px;
  line-height: 50px;
  gap: 14px;
`;
const HomeBar = styled.div`
  display: flex;
  gap: 6px;
  padding-left: 120px;
  i { height: 7px; background: #bbbcbe; }
  i:nth-child(1) { width: 245px; border-radius: 4px 0 0 4px; }
  i:nth-child(2) { width: 338px; }
  i:nth-child(3) { width: 245px; border-radius: 0 4px 4px 0; }
`;

function Bottom() {
  return (
    <BottomBar>
      <BottomRow>
        <Index>
          <svg width="22" height="8" viewBox="0 0 22 8"><path d="M11 0l11 8H0z" fill="#77787c" /></svg>
          <Text $size={41.5} $color="#109818" $ls={-1.5} $mt={8}>3965.12</Text>
          <IndexRow>
            <Text $size={35} $color="#666">上证</Text>
            <Text $size={37.5} $color="#109818" $ls={-1.5}>0.00%</Text>
          </IndexRow>
        </Index>
        <Action>
          <svg width="66" height="60" viewBox="0 0 66 60">
            <g fill="none" stroke="#666" strokeWidth="3.200">
              <path d="M17 7A27 27 0 0 1 57 42M51 52A27 27 0 0 1 8 18" />
              <path d="M1 21l8-6v9M65 39l-8 6v-9" />
              <path d="M23 17l10 12 10-12M33 29v17M23 30h20M23 38h20" />
            </g>
          </svg>
          交易
        </Action>
        <Action>
          <svg width="56" height="60" viewBox="0 0 56 60">
            <path d="M38 4H9a6 6 0 0 0-6 6v41a6 6 0 0 0 6 6h38a6 6 0 0 0 6-6V20" fill="none" stroke="#666" strokeWidth="3.500" />
            <path d="M20 41l3-10L44 12l5 4-22 21zM46 9l5-6 4 3-4 7z" fill="#666" />
          </svg>
          发帖
        </Action>
        <Action>
          <svg width="54" height="60" viewBox="0 0 54 60">
            <g fill="none" stroke="#666" strokeWidth="3.200">
              <rect x="2" y="6" width="22" height="22" rx="4" /><rect x="2" y="34" width="22" height="22" rx="4" />
              <rect x="30" y="34" width="22" height="22" rx="4" /><rect x="32" y="7.500" width="18" height="18" rx="2" transform="rotate(45 41 16.500)" />
            </g>
          </svg>
          功能
        </Action>
        <Action $active>
          <svg width="60" height="60" viewBox="0 0 60 60">
            <g fill="none" stroke={BRAND} strokeWidth="3.200"><circle cx="30" cy="30" r="27" /><path d="M30 16v28M16 30h28" /></g>
          </svg>
          加自选
        </Action>
      </BottomRow>
      <HomeBar><i /><i /><i /></HomeBar>
    </BottomBar>
  );
}

export default function App() {
  return (
    <Page>
      <Global />
      <Status />
      <Title />
      <QuotePanel />
      <NoticeBar />
      <PeriodTabs />
      <MaHeader />
      <ChartGrid>
        <Column>
          <CandleChart />
          <TurnoverHeader>
            <Pill $w={150} $gap={14}>换手率<Caret /></Pill>
            <Narrow $w={93} $ml={3} $color="#222" $scale={0.69}><span>0.990</span><Arrow color="#222" down /></Narrow>
            <Narrow $w={154} $ml={16} $color={ORANGE} $scale={0.74}><span>MA1:1.050</span><Arrow color={ORANGE} down /></Narrow>
            <Narrow $w={157} $ml={16} $color="#c238d4" $scale={0.74}><span>MA2:1.390</span><Arrow color="#c238d4" down /></Narrow>
            <Collapse><svg width="18" height="28" viewBox="0 0 18 28"><path d="M3 2l12 12L3 26" fill="none" stroke="#fff" strokeWidth="4" /></svg></Collapse>
          </TurnoverHeader>
          <TurnoverChart />
          <Dates>
            <Text $size={39} $color="#888" $ls={-1.1}>20250929</Text>
            <Text $size={39} $color="#888" $ls={-0.8}>20251230</Text>
          </Dates>
        </Column>
        <Column>
          <ChipChart />
          <ChipStats />
        </Column>
      </ChartGrid>
      <AskAi />
      <Promo>
        <svg width="48" height="42" viewBox="0 0 48 42">
          <path d="M1 14h4v15H1zM9 13L39 3V1h6v40h-6v-4l-13-2.500V38l-3 1-8-2-2-6-4-1z" fill="#e8560c" />
        </svg>
        <PromoText>邀好友领最高188元，多邀多得，上不封顶&gt;&gt;</PromoText>
        <PromoDivider />
        <svg width="32" height="32" viewBox="0 0 32 32"><path d="M1 1l30 30M31 1L1 31" stroke={BRAND} strokeWidth="3.400" /></svg>
      </Promo>
      <ContentTabs>
        <ContentTab $active>股吧</ContentTab>
        <ContentTab>盘口</ContentTab>
        <ContentTab>资讯</ContentTab>
        <ContentTab>公告</ContentTab>
        <ContentTab>研报</ContentTab>
        <ContentTab>财务</ContentTab>
        <ContentTab>资料</ContentTab>
      </ContentTabs>
      <Bottom />
    </Page>
  );
}
